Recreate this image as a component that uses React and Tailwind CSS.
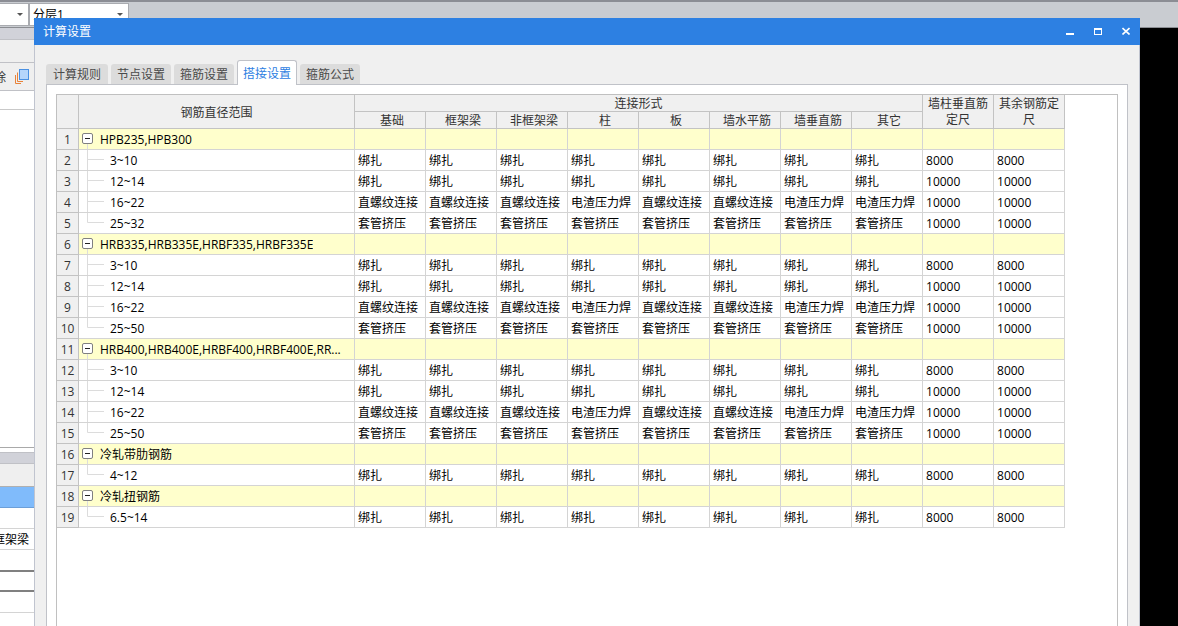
import clsx from 'clsx'

const TABS = ['计算规则', '节点设置', '箍筋设置', '搭接设置', '箍筋公式']
const ACTIVE_TAB = '搭接设置'

const CONNECTION_COLUMNS = ['基础', '框架梁', '非框架梁', '柱', '板', '墙水平筋', '墙垂直筋', '其它']

const TIE = Array(8).fill('绑扎')
const SLEEVE = Array(8).fill('套管挤压')
const THREAD = [
  '直螺纹连接',
  '直螺纹连接',
  '直螺纹连接',
  '电渣压力焊',
  '直螺纹连接',
  '直螺纹连接',
  '电渣压力焊',
  '电渣压力焊',
]

const GROUPS = [
  {
    name: 'HPB235,HPB300',
    rows: [
      { range: '3~10', types: TIE, length: 8000 },
      { range: '12~14', types: TIE, length: 10000 },
      { range: '16~22', types: THREAD, length: 10000 },
      { range: '25~32', types: SLEEVE, length: 10000 },
    ],
  },
  {
    name: 'HRB335,HRB335E,HRBF335,HRBF335E',
    rows: [
      { range: '3~10', types: TIE, length: 8000 },
      { range: '12~14', types: TIE, length: 10000 },
      { range: '16~22', types: THREAD, length: 10000 },
      { range: '25~50', types: SLEEVE, length: 10000 },
    ],
  },
  {
    name: 'HRB400,HRB400E,HRBF400,HRBF400E,RR...',
    rows: [
      { range: '3~10', types: TIE, length: 8000 },
      { range: '12~14', types: TIE, length: 10000 },
      { range: '16~22', types: THREAD, length: 10000 },
      { range: '25~50', types: SLEEVE, length: 10000 },
    ],
  },
  { name: '冷轧带肋钢筋', rows: [{ range: '4~12', types: TIE, length: 8000 }] },
  { name: '冷轧扭钢筋', rows: [{ range: '6.5~14', types: TIE, length: 8000 }] },
]

// flatten the tree so every line gets its running number
const LINES = GROUPS.flatMap((group) => [
  { group: true, name: group.name },
  ...group.rows.map((row, i) => ({ ...row, last: i === group.rows.length - 1 })),
])

function ToolbarSelect({ label, options, className }) {
  return (
    <div className={clsx('grid items-center border border-[#a9abb0] bg-white', className)}>
      <select
        aria-label={label}
        className="col-start-1 row-start-1 h-full w-full appearance-none bg-transparent pl-[3px] text-xs leading-5 text-black outline-none"
      >
        {options.map((option) => (
          <option key={option}>{option}</option>
        ))}
      </select>
      <svg
        className="pointer-events-none col-start-1 row-start-1 mr-[5px] justify-self-end"
        width="6"
        height="3"
        viewBox="0 0 6 3"
        fill="#555"
      >
        <path d="M0 0h6L3 3z" />
      </svg>
    </div>
  )
}

function MainWindow() {
  return (
    <div className="flex min-h-screen flex-col">
      <div className="flex h-7 items-start border-b border-[#8b8d92] bg-[#c9ccd1]">
        <div className="flex w-full border-t-2 border-[#8b8d94] pt-px">
          <ToolbarSelect label="楼层" options={['']} className="h-[23px] w-[29px] border-l-0" />
          <ToolbarSelect label="分层" options={['分层1']} className="h-[23px] w-[100px]" />
        </div>
      </div>

      <div className="flex grow bg-black">
        <div className="flex w-[34px] flex-col overflow-hidden bg-white">
          <div className="h-3 border-b border-[#c0c1c6] bg-[#d1d2d9]" />
          <div className="h-[23px] border-b border-[#c0c1c6] bg-[#efefef]" />
          <div className="flex h-7 items-center justify-between border-b border-[#c0c1c6] bg-[#efefef] pr-[5px]">
            <button className="flex w-[6px] justify-end overflow-hidden pt-[2px] text-xs text-[#333]">
              <span>除</span>
            </button>
            <button aria-label="复制">
              <svg width="14" height="15" viewBox="0 0 14 15" fill="none">
                <path d="M.5 6v8.5H6" stroke="#e8833a" />
                <path d="M2.5 3.5v9H8" stroke="#e8833a" />
                <rect x="4.5" y=".5" width="9" height="10" fill="#b5d5fb" stroke="#4a90e2" />
              </svg>
            </button>
          </div>
          <div className="h-[19px] border-b border-[#c9c9c9]" />
          <div className="h-[338px] border-b border-[#a9a9a9]" />
          <div className="mt-1 h-3 border-y border-[#c0c1c6] bg-[#d1d2d9]" />
          <div className="h-[23px] border-b border-[#b0b0b0] bg-[#efefef]" />
          <div className="h-[21px] border-b border-[#6c9fd8] bg-[#80bbfb]" />
          <div className="h-[21px] border-b border-[#d4d4d4]" />
          <div className="flex h-[21px] items-center justify-end border-b border-[#d4d4d4] pt-[2px] pr-[5px] text-xs whitespace-nowrap">
            框架梁
          </div>
          <div className="h-[22px] border-b-2 border-[#808080]" />
          <div className="h-5 border-b-2 border-[#808080]" />
          <div className="h-[21px] border-b border-[#d4d4d4]" />
        </div>
      </div>
    </div>
  )
}

function TitleBar() {
  return (
    <header className="flex h-[27px] shrink-0 items-center justify-between bg-[#2d80e2] pr-[10px] pl-[9px] text-white">
      <h1 className="text-xs">计算设置</h1>
      <div className="flex items-center gap-5 pb-px">
        <button aria-label="最小化">
          <svg width="8" height="8" viewBox="0 0 8 8" fill="currentColor">
            <path d="M0 6h8v2H0z" />
          </svg>
        </button>
        <button aria-label="最大化">
          <svg width="8" height="8" viewBox="0 0 8 8" fill="currentColor" fillRule="evenodd">
            <path d="M0 1h8v7H0zM1 3v4h6V3z" />
          </svg>
        </button>
        <button aria-label="关闭">
          <svg width="8" height="8" viewBox="0 0 8 8" fill="none" stroke="currentColor" strokeWidth="1.6">
            <path d="M.5 1l7 6.5M7.5 1l-7 6.5" />
          </svg>
        </button>
      </div>
    </header>
  )
}

function Tabs() {
  return (
    <div role="tablist" className="flex h-10 items-end gap-[3px]">
      {TABS.map((tab) => {
        const active = tab === ACTIVE_TAB
        return (
          <button
            key={tab}
            role="tab"
            aria-selected={active}
            className={clsx(
              'rounded-t-[3px] pt-[2px] text-xs',
              active
                ? 'z-10 h-[25px] border border-b-0 border-[#c0c2c8] bg-white px-[5px] text-[#2d80e2]'
                : 'mb-px h-5 bg-[#dcdcdc] px-[6px] text-[#4a4a4a] first:px-[7px]'
            )}
          >
            {tab}
          </button>
        )
      })}
    </div>
  )
}

function TreeCell({ line }) {
  if (line.group) {
    return (
      <div className="flex h-5 items-center gap-[7px] pl-[3px]">
        <div className="flex h-5 flex-col items-center pt-1">
          <button
            aria-label={`折叠 ${line.name}`}
            className="flex size-[11px] shrink-0 items-center justify-center rounded-[2px] border border-[#808080] bg-white"
          >
            <span className="h-px w-[5px] bg-[#222]" />
          </button>
          <span className="w-px grow bg-[#dcdcdc]" />
        </div>
        <span className="truncate pt-[2px]">{line.name}</span>
      </div>
    )
  }
  return (
    <div className="flex h-5 items-center gap-[6px] pl-[3px]">
      <svg width="22" height="20" viewBox="0 0 22 20" fill="none" stroke="#dcdcdc">
        <path d={line.last ? 'M5.5 0v9.5H22' : 'M5.5 0v20M5.5 9.5H22'} />
      </svg>
      <span className="pt-[2px]">{line.range}</span>
    </div>
  )
}

function SettingsTable() {
  const head = 'border-r border-b border-[#c3c3c3] bg-[#f0f0f0] pb-0 font-normal text-[#333]'
  const cell = 'border-r border-b border-[#d4d4d4] pt-[2px] pr-0 pb-0 pl-[3px] whitespace-nowrap'

  return (
    <table className="w-[1008px] table-fixed border-separate border-spacing-0 text-xs">
      <colgroup>
        <col className="w-[22px]" />
        <col className="w-[276px]" />
        {CONNECTION_COLUMNS.map((name) => (
          <col key={name} className="w-[71px]" />
        ))}
        <col className="w-[71px]" />
        <col className="w-[71px]" />
      </colgroup>
      <thead className="leading-[14px]">
        <tr className="h-[17px]">
          <th rowSpan={2} className={clsx(head, 'px-0 pt-[2px]')} />
          <th rowSpan={2} className={clsx(head, 'px-0 pt-[2px]')}>
            钢筋直径范围
          </th>
          <th colSpan={8} className={clsx(head, 'px-0 pt-[2px]')}>
            连接形式
          </th>
          <th rowSpan={2} className={clsx(head, 'px-1 pt-px leading-4')}>
            墙柱垂直筋定尺
          </th>
          <th rowSpan={2} className={clsx(head, 'px-1 pt-px leading-4')}>
            其余钢筋定尺
          </th>
        </tr>
        <tr className="h-[17px]">
          {CONNECTION_COLUMNS.map((name) => (
            <th key={name} className={clsx(head, 'pt-[2px] pr-0 pl-1')}>
              {name}
            </th>
          ))}
        </tr>
      </thead>
      <tbody className="leading-[18px] text-black">
        {LINES.map((line, index) => (
          <tr key={index} className={line.group ? 'bg-[#ffffcc]' : 'bg-white'}>
            <th className={clsx(head, 'px-0 pt-[2px]')}>{index + 1}</th>
            <td className="border-r border-b border-[#d4d4d4] p-0 whitespace-nowrap">
              <TreeCell line={line} />
            </td>
            {CONNECTION_COLUMNS.map((name, i) => (
              <td key={name} className={cell}>
                {line.types?.[i]}
              </td>
            ))}
            <td className={cell}>{line.length}</td>
            <td className={cell}>{line.length}</td>
          </tr>
        ))}
      </tbody>
    </table>
  )
}

export default function App() {
  return (
    <div
      lang="zh-CN"
      className="relative min-h-screen overflow-hidden font-['Open_Sans','Noto_Sans_CJK_SC',sans-serif]"
    >
      <MainWindow />
      {/* dialog floats over the main window */}
      <section className="absolute top-[18px] right-[38px] bottom-0 left-[34px] flex flex-col">
        <TitleBar />
        <div className="flex grow flex-col border-x border-[#c0c4cf] bg-[#f0f0f0] px-[11px]">
          <Tabs />
          <div className="-mt-px flex grow flex-col border border-b-0 border-[#c0c2c8] bg-white px-[9px] pt-[9px]">
            <div className="grow border border-b-0 border-[#c0c0c0]">
              <SettingsTable />
            </div>
          </div>
        </div>
      </section>
    </div>
  )
}
